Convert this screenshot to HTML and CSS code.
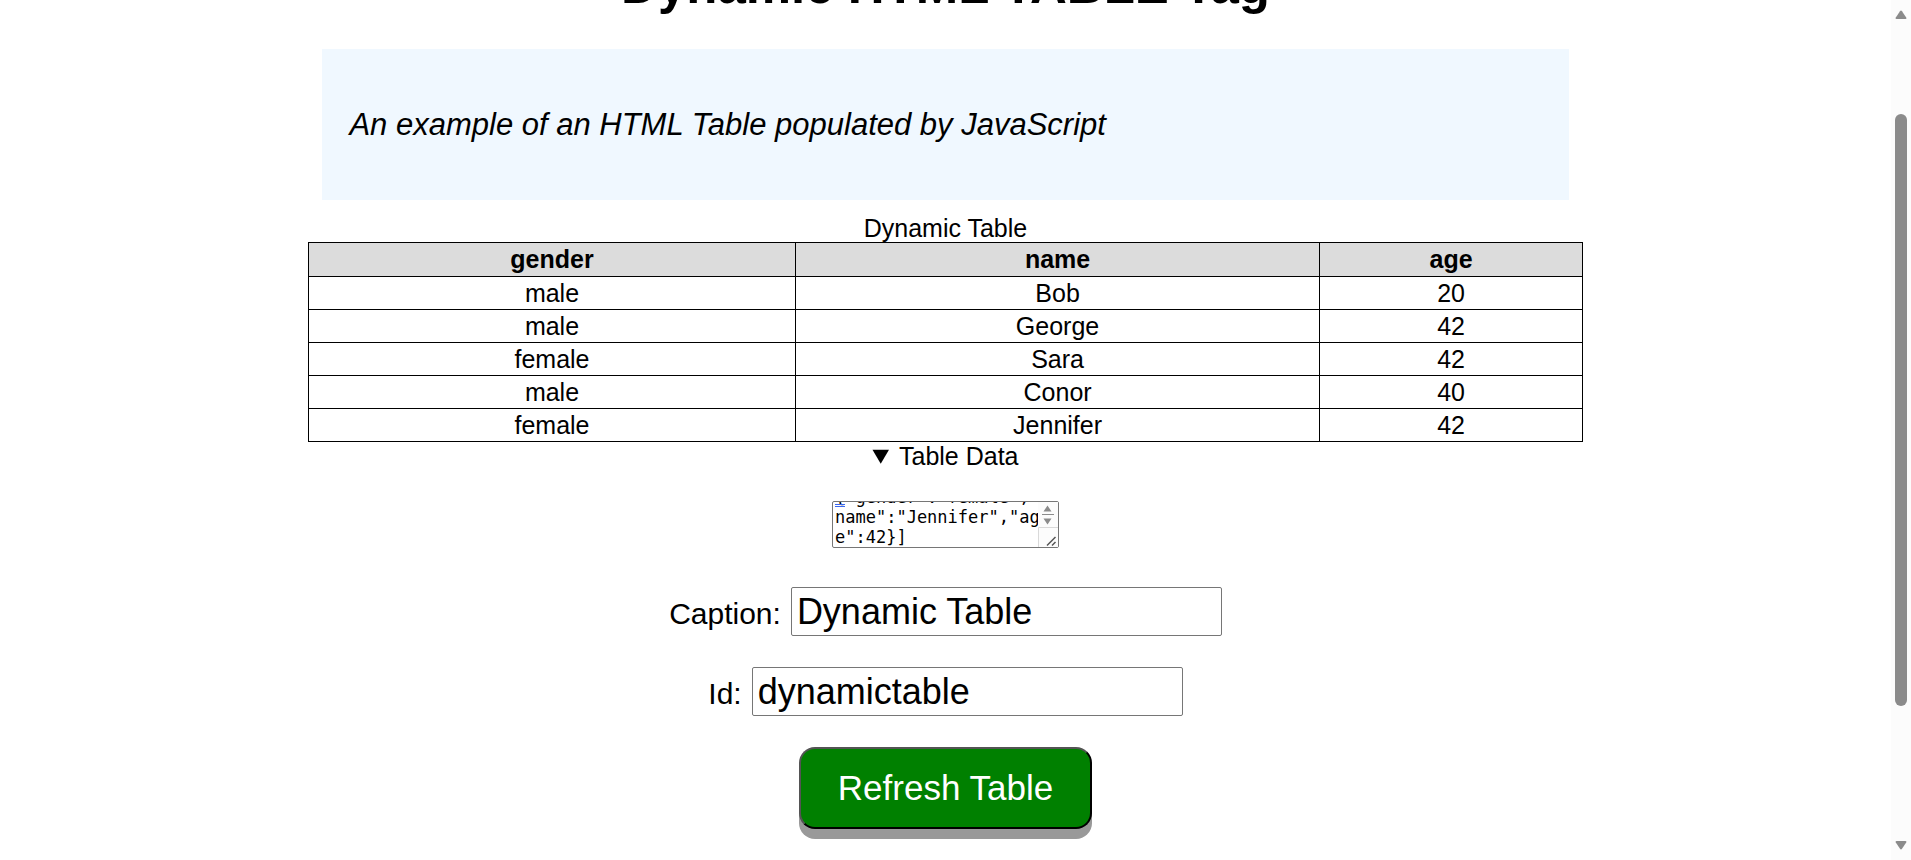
FILE: index.html
```html
<!DOCTYPE html>
<html lang="en">
<head>
<meta charset="utf-8">
<title>Dynamic HTML TABLE Tag</title>
<link rel="stylesheet" href="styles.css">
</head>
<body>
<main class="page">
  <h1 class="title">Dynamic HTML TABLE Tag</h1>
  <p class="intro">An example of an HTML Table populated by JavaScript</p>
  <table class="data" id="dynamictable">
    <caption>Dynamic Table</caption>
    <colgroup><col class="col-gender"><col class="col-name"><col class="col-age"></colgroup>
    <thead><tr><th>gender</th><th>name</th><th>age</th></tr></thead>
    <tbody>
      <tr><td>male</td><td>Bob</td><td>20</td></tr>
      <tr><td>male</td><td>George</td><td>42</td></tr>
      <tr><td>female</td><td>Sara</td><td>42</td></tr>
      <tr><td>male</td><td>Conor</td><td>40</td></tr>
      <tr><td>female</td><td>Jennifer</td><td>42</td></tr>
    </tbody>
  </table>
  <details class="source" open>
    <summary>Table Data</summary>
    <div class="editor">
      <textarea class="json" id="json" aria-label="Table Data" spellcheck="false">[{"gender":"male","name":"Bob","age":20},
{"gender":"male","name":"George","age":42},
{"gender":"female","name":"Sara","age":42},
{"gender":"male","name":"Conor","age":40},
{"gender":"female","
name":"Jennifer","ag
e":42}]</textarea>
      <span class="mark"></span>
      <svg class="grip" width="20" height="45" viewBox="0 0 20 45" aria-hidden="true">
        <rect width="20" height="45" fill="#fcfcfc"/>
        <path d="M5.5 9.500 9.500 3.500 13.500 9.500zM5.500 16.500 9.500 22.500 13.500 16.500z" fill="#8b8b8b"/>
        <path d="M4 12.500h12" stroke="#8b8b8b"/>
        <path d="M0.500 45V25.500H20" fill="none" stroke="#d9d9d9"/>
        <path d="M9 43.500 17.500 35M14 43.500 17.500 40" fill="none" stroke="#555" stroke-width="1.500"/>
      </svg>
    </div>
  </details>
  <div class="field"><label for="caption">Caption:</label><input id="caption" type="text" value="Dynamic Table"></div>
  <div class="field"><label for="tableid">Id:</label><input id="tableid" type="text" value="dynamictable"></div>
  <button class="refresh" type="button">Refresh Table</button>
</main>
<div class="scrollbar" aria-hidden="true">
  <svg width="12" height="10" viewBox="0 0 12 10"><path d="M1.500 9Q0 9 .8 7.500L5 1.200Q6 0 7 1.200L11.200 7.500Q12 9 10.500 9z" fill="#8b8b8b"/></svg>
  <div class="track"><div class="thumb"></div></div>
  <svg width="12" height="10" viewBox="0 0 12 10"><path d="M1.500 1Q0 1 .8 2.500L5 8.800Q6 10 7 8.800L11.200 2.500Q12 1 10.500 1z" fill="#8b8b8b"/></svg>
</div>
<script src="main.js"></script>
</body>
</html>
```
FILE: styles.css
```css
* { box-sizing: border-box; }

body {
  display: flex;
  height: 100vh;
  margin: 0;
  overflow: hidden;
  background: #fff;
  color: #000;
  font: 25px/28px "Liberation Sans", Arial, sans-serif;
}

.page {
  display: flex;
  flex: 1;
  flex-direction: column;
  align-items: center;
  overflow: hidden;
}

.page > * { flex-shrink: 0; }

.title {
  margin: -44px 0 34px;
  font-size: 51px;
  line-height: 59px;
}

.intro {
  width: 65.9%;
  margin: 0 0 14px;
  padding: 60px 27px;
  background: #f0f8ff;
  font-size: 31px;
  font-style: italic;
  line-height: 31px;
}

.data {
  width: 67.4%;
  border-collapse: collapse;
  table-layout: fixed;
  text-align: center;
}

.col-gender { width: 38.2%; }
.col-name { width: 41.2%; }
.col-age { width: 20.6%; }

.data th,
.data td {
  padding: 2px;
  border: 1px solid #000;
}

.data th {
  padding: 3px;
  background: #dcdcdc;
  line-height: 27px;
}

.source {
  margin-bottom: 39px;
  text-align: center;
}

.source summary {
  margin-bottom: 31px;
  line-height: 28px;
}

.editor {
  position: relative;
  display: inline-block;
  width: 227px;
  height: 47px;
  vertical-align: top;
}

.json {
  display: block;
  width: 100%;
  height: 100%;
  margin: 0;
  padding: 2px 12px 0 2px;
  border: 1px solid #767676;
  border-radius: 2px;
  overflow: hidden;
  resize: none;
  color: #000;
  font: 17px/20px "DejaVu Sans Mono", monospace;
  white-space: pre-wrap;
  word-break: break-all;
  line-break: anywhere;
}

.grip {
  position: absolute;
  top: 1px;
  right: 1px;
}

.mark {
  position: absolute;
  top: 3px;
  left: 3px;
  width: 10px;
  height: 3px;
  border: solid #3b67f0;
  border-width: 1px 0;
}

.field {
  display: flex;
  align-items: center;
  gap: 10px;
  margin-bottom: 31px;
  font-size: 30px;
}

.field label { padding-top: 4px; }

.field input {
  width: 431px;
  height: 49px;
  padding: 0 5px;
  border: 1px solid #767676;
  border-radius: 2px;
  color: #000;
  font: 36px "Liberation Sans", Arial, sans-serif;
}

.refresh {
  padding: 20px 37px;
  border: 2px outset #000;
  border-radius: 16px;
  background: #008000;
  box-shadow: 0 10px #999;
  color: #fff;
  font: 35px/38px "Liberation Sans", Arial, sans-serif;
}

.scrollbar {
  display: flex;
  flex-direction: column;
  align-items: center;
  width: 20px;
  padding: 10px 0;
  background: #fcfcfc;
}

.track {
  flex: 1;
  width: 12px;
  padding-top: 94px;
}

.thumb {
  height: 81.5%;
  border-radius: 6px;
  background: #8b8b8b;
}
```
FILE: main.js
```js
const json = document.getElementById("json");
json.scrollTop = json.scrollHeight;
```
